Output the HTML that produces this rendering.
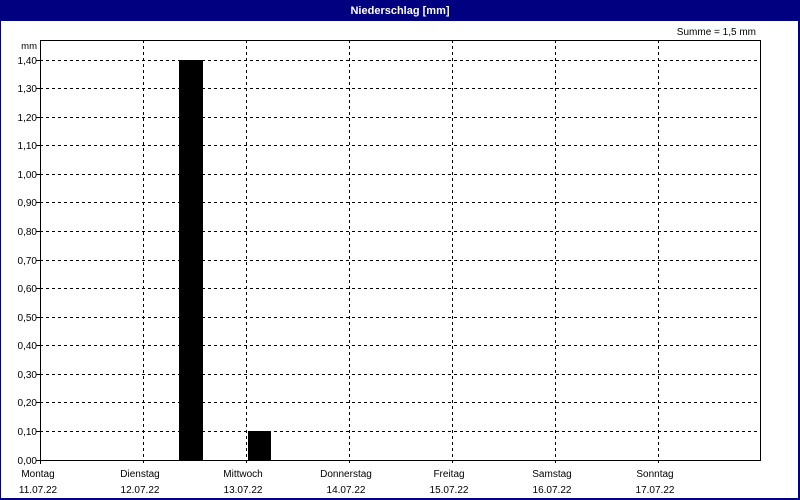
<!DOCTYPE html>
<html><head><meta charset="utf-8"><style>
html,body{margin:0;padding:0;background:#fff;}
svg{display:block;font-family:"Liberation Sans",Tahoma,sans-serif;}
</style></head><body>
<svg width="800" height="500" xmlns="http://www.w3.org/2000/svg">
<rect x="0" y="0" width="800" height="500" fill="#000080"/>
<rect x="1" y="21" width="797" height="477" fill="#fff"/>
<text x="400" y="14" fill="#fff" font-size="11" font-weight="bold" text-anchor="middle">Niederschlag [mm]</text>
<text x="756" y="35" fill="#000" font-size="10" text-anchor="end">Summe = 1,5 mm</text>
<text x="37" y="49" fill="#000" font-size="9.5" text-anchor="end">mm</text>
<g stroke="#000" stroke-width="1" stroke-dasharray="3,3" fill="none">
<path d="M40 60.5H760M40 88.5H760M40 117.5H760M40 145.5H760M40 174.5H760M40 202.5H760M40 231.5H760M40 260.5H760M40 288.5H760M40 317.5H760M40 345.5H760M40 374.5H760M40 402.5H760M40 431.5H760"/>
<path d="M143.5 40V465M246.5 40V465M349.5 40V465M452.5 40V465M555.5 40V465M658.5 40V465"/>
</g>
<g stroke="#000" stroke-width="1" fill="none">
<path d="M40.5 40.5H760.5V460.5H36"/>
<path d="M40.5 40V464"/>
<path d="M36 60.5H40M36 88.5H40M36 117.5H40M36 145.5H40M36 174.5H40M36 202.5H40M36 231.5H40M36 260.5H40M36 288.5H40M36 317.5H40M36 345.5H40M36 374.5H40M36 402.5H40M36 431.5H40"/>
</g>
<rect x="179" y="60" width="24" height="400" fill="#000"/>
<rect x="248" y="431" width="23" height="29" fill="#000"/>
<g font-size="10" fill="#000" text-anchor="end">
<text x="37" y="64">1,40</text><text x="37" y="92">1,30</text><text x="37" y="121">1,20</text><text x="37" y="149">1,10</text><text x="37" y="178">1,00</text><text x="37" y="206">0,90</text><text x="37" y="235">0,80</text><text x="37" y="264">0,70</text><text x="37" y="292">0,60</text><text x="37" y="321">0,50</text><text x="37" y="349">0,40</text><text x="37" y="378">0,30</text><text x="37" y="406">0,20</text><text x="37" y="435">0,10</text><text x="37" y="464">0,00</text>
</g>
<g font-size="10" fill="#000" text-anchor="middle">
<text x="38" y="477">Montag</text><text x="38" y="493">11.07.22</text>
<text x="140" y="477">Dienstag</text><text x="140" y="493">12.07.22</text>
<text x="243" y="477">Mittwoch</text><text x="243" y="493">13.07.22</text>
<text x="346" y="477">Donnerstag</text><text x="346" y="493">14.07.22</text>
<text x="449" y="477">Freitag</text><text x="449" y="493">15.07.22</text>
<text x="552" y="477">Samstag</text><text x="552" y="493">16.07.22</text>
<text x="655" y="477">Sonntag</text><text x="655" y="493">17.07.22</text>
</g>
</svg>
</body></html>
